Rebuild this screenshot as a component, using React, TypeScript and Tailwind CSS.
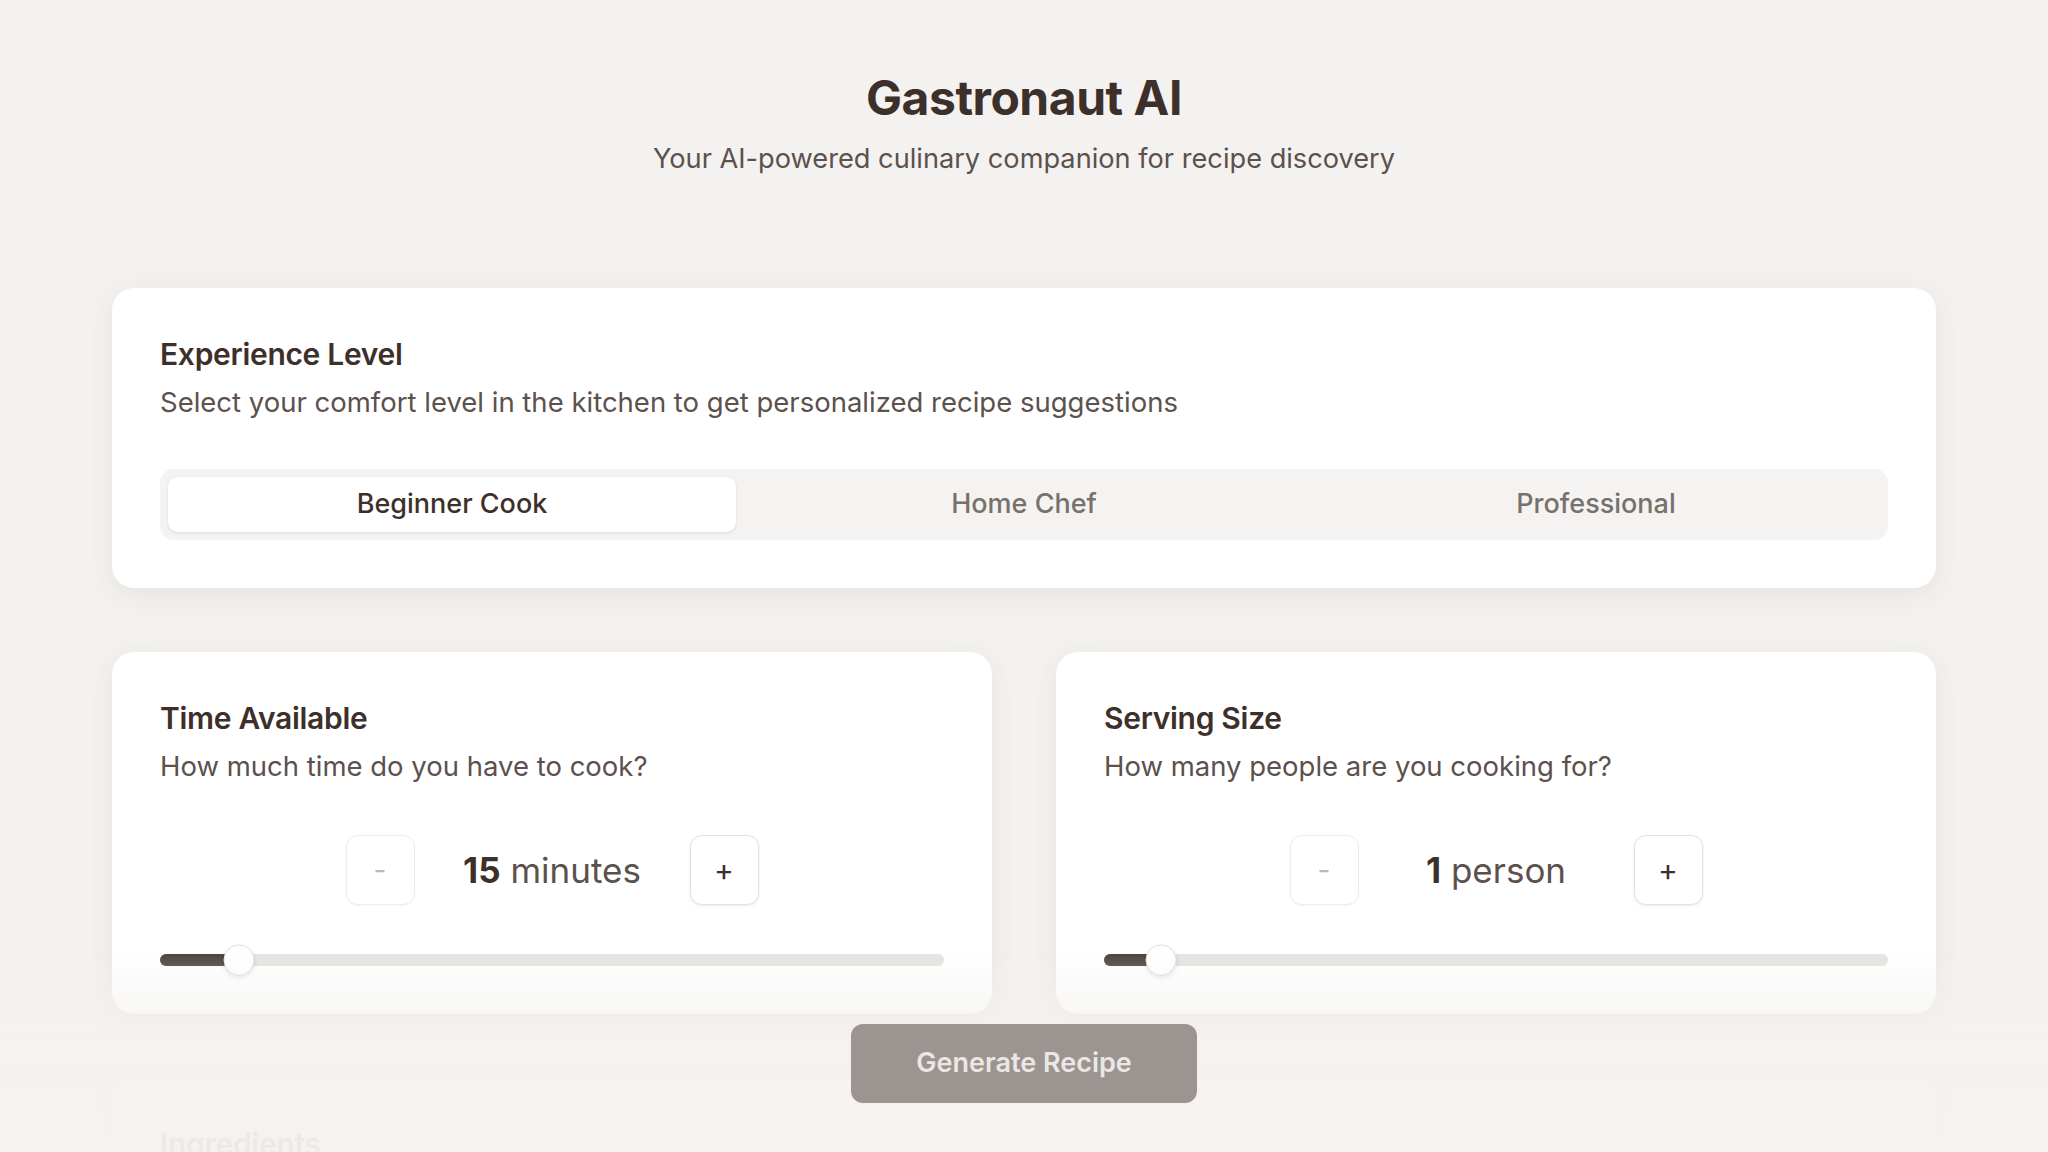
import { useState } from 'react';

type Level = 'beginner' | 'home' | 'pro';

const levels: { id: Level; label: string }[] = [
  { id: 'beginner', label: 'Beginner Cook' },
  { id: 'home', label: 'Home Chef' },
  { id: 'pro', label: 'Professional' },
];

const font = { fontFamily: 'Inter, "Noto Sans", sans-serif' };

function Card({ title, description, children }: { title: string; description?: string; children?: React.ReactNode }) {
  return (
    <section className="bg-white rounded-[22px] p-12 shadow-[0_6px_28px_rgba(61,48,43,0.08)]">
      <h2 className="text-[30px] leading-[36px] font-semibold tracking-[-0.01em] text-[#3d302b]">{title}</h2>
      {description && (
        <p className="mt-[10px] text-[27.5px] leading-[40px] text-[#5c514c]">{description}</p>
      )}
      {children}
    </section>
  );
}

function Stepper({
  value,
  unit,
  thumbAt,
  onMinus,
  onPlus,
  minusDisabled,
}: {
  value: number;
  unit: string;
  thumbAt: number;
  onMinus: () => void;
  onPlus: () => void;
  minusDisabled?: boolean;
}) {
  return (
    <>
      <div className="mt-[49px] flex items-center justify-center gap-6">
        <button
          onClick={onMinus}
          className={`w-[69px] h-[70px] rounded-[12px] bg-white border border-[#efecea] text-[28px] leading-none flex items-center justify-center shadow-[0_1px_2px_rgba(0,0,0,0.04)] ${
            minusDisabled ? 'text-[#bdb7b3]' : 'text-[#3d302b]'
          }`}
        >
          -
        </button>
        <div className="w-[227px] text-center text-[35px] leading-[44px] text-[#5c514c]">
          <span className="font-bold text-[#3d302b]">{value}</span> {unit}
        </div>
        <button
          onClick={onPlus}
          className="w-[69px] h-[70px] rounded-[12px] bg-white border border-[#e6e2df] text-[30px] leading-none text-[#3d302b] flex items-center justify-center shadow-[0_1px_3px_rgba(0,0,0,0.08)]"
        >
          +
        </button>
      </div>
      <div className="relative mt-[49px] h-3 rounded-full bg-[#e6e2df]">
        <div className="absolute left-0 top-0 h-3 rounded-full bg-[#4a3d38]" style={{ width: thumbAt }} />
        <div
          className="absolute top-1/2 w-[31px] h-[31px] -translate-x-1/2 -translate-y-1/2 rounded-full bg-white border border-[#e6e2df] shadow-[0_2px_4px_rgba(0,0,0,0.12)]"
          style={{ left: thumbAt }}
        />
      </div>
    </>
  );
}

export default function App() {
  const [level, setLevel] = useState<Level>('beginner');
  const [minutes, setMinutes] = useState(15);
  const [people, setPeople] = useState(1);

  return (
    <div className="min-h-screen bg-[#f4f2f0] antialiased" style={font}>
      <main className="px-[112px] pt-[69px] pb-[260px]">
        <header className="text-center">
          <h1 className="text-[48px] leading-[58px] font-bold tracking-[-0.01em] text-[#3d302b]">Gastronaut AI</h1>
          <p className="mt-3 text-[27.2px] leading-[40px] text-[#5c514c]">
            Your AI-powered culinary companion for recipe discovery
          </p>
        </header>

        <div className="mt-[109px] flex flex-col gap-[64px]">
          <Card
            title="Experience Level"
            description="Select your comfort level in the kitchen to get personalized recipe suggestions"
          >
            <div className="mt-[47px] grid grid-cols-3 gap-1 p-2 rounded-[14px] bg-[#f4f3f1]">
              {levels.map((l) => {
                const active = level === l.id;
                return (
                  <button
                    key={l.id}
                    onClick={() => setLevel(l.id)}
                    className={`h-[55px] rounded-[10px] text-[27px] font-medium ${
                      active
                        ? 'bg-white text-[#3d302b] shadow-[0_1px_3px_rgba(0,0,0,0.1)]'
                        : 'text-[#78706b]'
                    }`}
                  >
                    {l.label}
                  </button>
                );
              })}
            </div>
          </Card>

          <div className="grid grid-cols-2 gap-[64px]">
            <Card title="Time Available" description="How much time do you have to cook?">
              <Stepper
                value={minutes}
                unit="minutes"
                thumbAt={79}
                minusDisabled={minutes <= 15}
                onMinus={() => setMinutes((m) => Math.max(15, m - 15))}
                onPlus={() => setMinutes((m) => m + 15)}
              />
            </Card>
            <Card title="Serving Size" description="How many people are you cooking for?">
              <Stepper
                value={people}
                unit={people === 1 ? 'person' : 'people'}
                thumbAt={57}
                minusDisabled={people <= 1}
                onMinus={() => setPeople((p) => Math.max(1, p - 1))}
                onPlus={() => setPeople((p) => p + 1)}
              />
            </Card>
          </div>

          <Card title="Ingredients" description="List what you have on hand, separated by commas">
            <div className="mt-8 h-[160px] rounded-[14px] border border-[#e6e2df] bg-[#faf9f8]" />
          </Card>
        </div>
      </main>

      {/* bottom fade + action */}
      <div className="fixed inset-x-0 bottom-0 h-[202px] flex items-end justify-center pb-[49px] bg-[linear-gradient(to_bottom,rgba(244,242,240,0)_0%,rgba(244,242,240,0.5)_25%,rgba(244,242,240,0.9)_55%,rgba(244,242,240,0.96)_100%)]">
        <button
          disabled
          className="w-[346px] h-[79px] rounded-[12px] bg-[#9c9491] text-[27px] font-semibold text-[#ebe7e4]"
        >
          Generate Recipe
        </button>
      </div>
    </div>
  );
}
